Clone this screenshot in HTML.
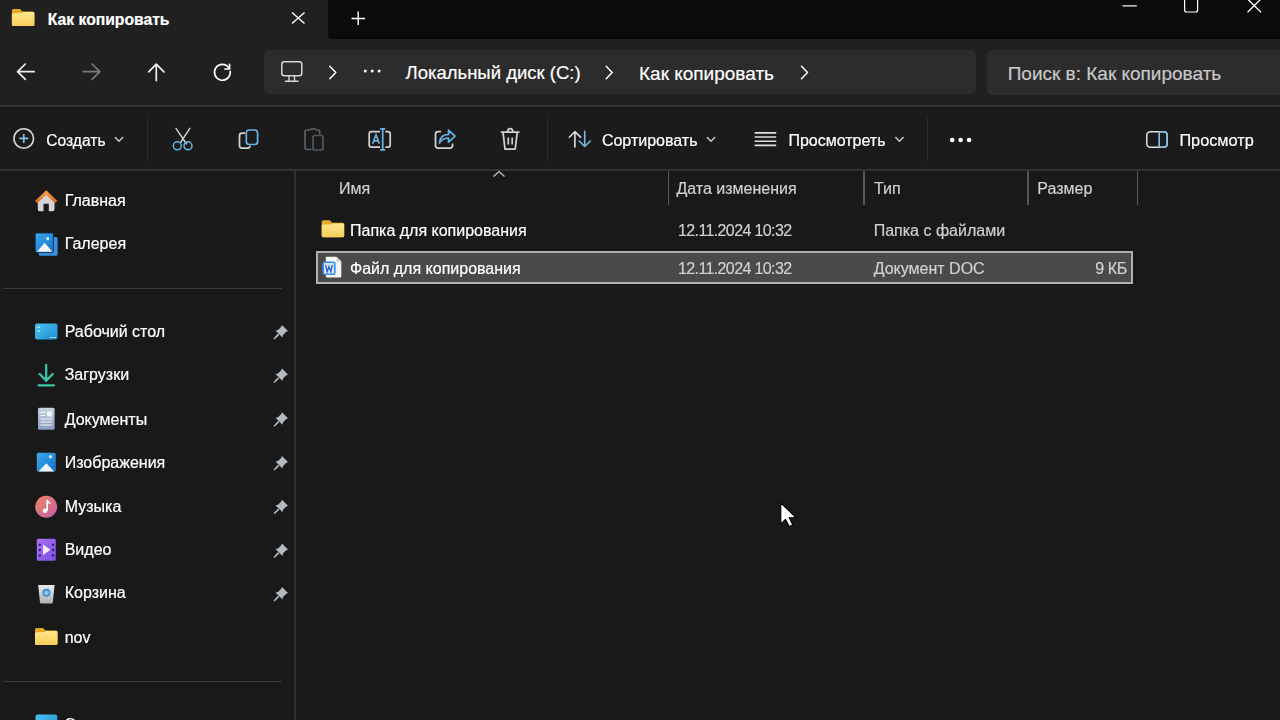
<!DOCTYPE html>
<html><head><meta charset="utf-8">
<style>
*{margin:0;padding:0;box-sizing:border-box}
html,body{width:1280px;height:720px;overflow:hidden;background:#191919;font-family:"Liberation Sans",sans-serif;color:#fff}
.a{position:absolute}
svg.i{position:absolute;overflow:visible}
.t{position:absolute;white-space:nowrap;line-height:1;-webkit-text-stroke:0.2px currentColor}
</style></head><body><div id="wrap" style="position:absolute;left:-4px;top:-4px;width:1288px;height:728px;overflow:hidden;filter:blur(0.35px)"><div style="position:absolute;left:4px;top:4px;width:1280px;height:720px">
<div class="a" style="left:0;top:0;width:1280px;height:105px;background:#202020"></div>
<div class="a" style="left:328px;top:0;width:952px;height:39.4px;background:#0b0b0b;border-bottom-left-radius:4px"></div>
<div class="a" style="left:332px;top:35px;width:948px;height:4.4px;background:linear-gradient(#0b0b0b,#060606)"></div>
<div class="a" style="left:263.5px;top:50px;width:712px;height:44px;background:#2c2c2c;border-radius:5px"></div>
<div class="a" style="left:986.8px;top:50px;width:320px;height:45px;background:#2c2c2c;border-radius:5px"></div>
<div class="a" style="left:0;top:107px;width:1280px;height:62px;background:#1b1b1b"></div>
<div class="a" style="left:0;top:107px;width:1280px;height:1.5px;background:#171717"></div>
<div class="a" style="left:0;top:105px;width:1280px;height:2px;background:#333333"></div>
<div class="a" style="left:0;top:169px;width:1280px;height:2px;background:#333333"></div>
<div class="a" style="left:292.5px;top:171px;width:1.5px;height:549px;background:#161616"></div>
<div class="a" style="left:294.3px;top:171px;width:2px;height:549px;background:#2f2f2f"></div>
<div class="a" style="left:146.5px;top:118px;width:1px;height:43px;background:#2e2e2e"></div>
<div class="a" style="left:546.5px;top:118px;width:1px;height:43px;background:#2e2e2e"></div>
<div class="a" style="left:927.0px;top:118px;width:1px;height:43px;background:#2e2e2e"></div>
<div class="a" style="left:3px;top:288px;width:279px;height:1px;background:#3a3a3a"></div>
<div class="a" style="left:3px;top:681px;width:279px;height:1px;background:#3a3a3a"></div>
<div class="a" style="left:667.85px;top:171px;width:1.6px;height:34px;background:#575757"></div>
<div class="a" style="left:863.15px;top:171px;width:1.6px;height:34px;background:#575757"></div>
<div class="a" style="left:1027.25px;top:171px;width:1.6px;height:34px;background:#575757"></div>
<div class="a" style="left:1136.65px;top:171px;width:1.6px;height:34px;background:#575757"></div>
<div class="a" style="left:316.2px;top:250.7px;width:817px;height:33.6px;background:#4a4a4a;border:2px solid #b0b0b0"></div>
<div class="t" style="left:47.80px;top:11.71px;font-size:15.7px;color:#ffffff;font-weight:700;">Как копировать</div>
<div class="t" style="left:405.50px;top:64.14px;font-size:18.5px;color:#ffffff;font-weight:400;">Локальный диск (C:)</div>
<div class="t" style="left:639.00px;top:63.72px;font-size:19px;color:#ffffff;font-weight:400;">Как копировать</div>
<div class="t" style="left:1007.70px;top:63.72px;font-size:19px;color:#c8c8c8;font-weight:400;">Поиск в: Как копировать</div>
<div class="t" style="left:46.25px;top:133.04px;font-size:15.6px;color:#ffffff;font-weight:400;">Создать</div>
<div class="t" style="left:601.90px;top:132.71px;font-size:16px;color:#ffffff;font-weight:400;">Сортировать</div>
<div class="t" style="left:788.40px;top:132.71px;font-size:16px;color:#ffffff;font-weight:400;">Просмотреть</div>
<div class="t" style="left:1179.40px;top:132.45px;font-size:16.3px;color:#ffffff;font-weight:400;">Просмотр</div>
<div class="t" style="left:64.70px;top:192.96px;font-size:16px;color:#ffffff;font-weight:400;">Главная</div>
<div class="t" style="left:64.70px;top:236.46px;font-size:16px;color:#ffffff;font-weight:400;">Галерея</div>
<div class="t" style="left:64.70px;top:323.86px;font-size:16px;color:#ffffff;font-weight:400;">Рабочий стол</div>
<div class="t" style="left:64.70px;top:367.26px;font-size:16px;color:#ffffff;font-weight:400;">Загрузки</div>
<div class="t" style="left:64.70px;top:411.96px;font-size:16px;color:#ffffff;font-weight:400;">Документы</div>
<div class="t" style="left:64.70px;top:454.96px;font-size:16px;color:#ffffff;font-weight:400;">Изображения</div>
<div class="t" style="left:64.70px;top:498.66px;font-size:16px;color:#ffffff;font-weight:400;">Музыка</div>
<div class="t" style="left:64.70px;top:542.36px;font-size:16px;color:#ffffff;font-weight:400;">Видео</div>
<div class="t" style="left:64.70px;top:585.36px;font-size:16px;color:#ffffff;font-weight:400;">Корзина</div>
<div class="t" style="left:64.70px;top:629.56px;font-size:16px;color:#ffffff;font-weight:400;">nov</div>
<div class="t" style="left:339.00px;top:180.76px;font-size:16px;color:#d0d0d0;font-weight:400;">Имя</div>
<div class="t" style="left:676.40px;top:180.76px;font-size:16px;color:#d0d0d0;font-weight:400;">Дата изменения</div>
<div class="t" style="left:874.00px;top:180.76px;font-size:16px;color:#d0d0d0;font-weight:400;">Тип</div>
<div class="t" style="left:1037.30px;top:180.76px;font-size:16px;color:#d0d0d0;font-weight:400;">Размер</div>
<div class="t" style="left:350.00px;top:222.86px;font-size:16px;color:#ffffff;font-weight:400;">Папка для копирования</div>
<div class="t" style="left:678.00px;top:222.86px;font-size:16px;color:#d0d0d0;font-weight:400;letter-spacing:-0.62px">12.11.2024 10:32</div>
<div class="t" style="left:873.70px;top:222.86px;font-size:16px;color:#d0d0d0;font-weight:400;">Папка с файлами</div>
<div class="t" style="left:350.00px;top:260.96px;font-size:16px;color:#ffffff;font-weight:400;">Файл для копирования</div>
<div class="t" style="left:678.00px;top:260.96px;font-size:16px;color:#d0d0d0;font-weight:400;letter-spacing:-0.62px">12.11.2024 10:32</div>
<div class="t" style="left:873.70px;top:260.96px;font-size:16px;color:#d0d0d0;font-weight:400;">Документ DOC</div>
<div class="t" style="right:153.20px;top:260.96px;font-size:16px;color:#d0d0d0;font-weight:400;letter-spacing:-0.4px">9 КБ</div>
<div class="t" style="left:64.70px;top:717.46px;font-size:16px;color:#ffffff;font-weight:400;">Этот компьютер</div>
<svg class="i" style="left:0;top:0" width="1280" height="720" viewBox="0 0 1280 720"><defs>
<linearGradient id="fgrad" x1="0" y1="0" x2="0" y2="1"><stop offset="0" stop-color="#ffe88e"/><stop offset="1" stop-color="#f6cd58"/></linearGradient>
<linearGradient id="roof" x1="0" y1="0" x2="0" y2="1"><stop offset="0" stop-color="#f7a24a"/><stop offset="1" stop-color="#d86a1e"/></linearGradient>
<linearGradient id="desk" x1="0" y1="0" x2="1" y2="1"><stop offset="0" stop-color="#4cc2f0"/><stop offset="1" stop-color="#1a8fd0"/></linearGradient>
<linearGradient id="pic" x1="0" y1="0" x2="1" y2="1"><stop offset="0" stop-color="#3aa7ee"/><stop offset="1" stop-color="#1473c8"/></linearGradient>
<linearGradient id="mus" x1="0" y1="0" x2="1" y2="1"><stop offset="0" stop-color="#f08a60"/><stop offset="1" stop-color="#c05aa8"/></linearGradient>
<linearGradient id="vid" x1="0" y1="0" x2="1" y2="1"><stop offset="0" stop-color="#a774f4"/><stop offset="1" stop-color="#7e4ee0"/></linearGradient>
<linearGradient id="doc" x1="0" y1="0" x2="0" y2="1"><stop offset="0" stop-color="#c8d4e4"/><stop offset="1" stop-color="#8a9cb8"/></linearGradient>
<linearGradient id="bin" x1="0" y1="0" x2="0" y2="1"><stop offset="0" stop-color="#e8ecf0"/><stop offset="1" stop-color="#a8b0b8"/></linearGradient>
</defs>
<g transform="translate(11.9,8.5) scale(1.0)">
<path d="M1.5 0.5 H8 L10.5 3 H21 Q22.5 3 22.5 4.5 V16 Q22.5 17.5 21 17.5 H1.5 Q0 17.5 0 16 V2 Q0 0.5 1.5 0.5Z" fill="#e6a826"/>
<path d="M1.5 4.8 H9 L11 3.6 H21 Q22.5 3.6 22.5 5.1 V16 Q22.5 17.5 21 17.5 H1.5 Q0 17.5 0 16 V6.3 Q0 4.8 1.5 4.8Z" fill="url(#fgrad)"/>
</g>
<path d="M292 12.5 L304.5 23.5 M304.5 12.5 L292 23.5" stroke="#ffffff" stroke-width="1.4" fill="none"/>
<path d="M351.5 18.5 H365 M358.2 11.5 V25" stroke="#ffffff" stroke-width="1.4" fill="none"/>
<path d="M1122.5 5.9 H1136.8" stroke="#ffffff" stroke-width="1.2" fill="none"/>
<rect x="1184.6" y="-3" width="13" height="15" rx="2" stroke="#ffffff" stroke-width="1.2" fill="none"/>
<path d="M1247.5 -1 L1261 12.2 M1261 -1 L1247.5 12.2" stroke="#ffffff" stroke-width="1.2" fill="none"/>
<path d="M17.6 71.7 H34.2 M25.3 64 L17.6 71.7 L25.3 79.4" stroke="#f0f0f0" stroke-width="1.7" fill="none" stroke-linejoin="round" stroke-linecap="round"/>
<path d="M83.2 71.7 H99.8 M92.1 64 L99.8 71.7 L92.1 79.4" stroke="#7a7a7a" stroke-width="1.7" fill="none" stroke-linejoin="round" stroke-linecap="round"/>
<path d="M156.3 64.3 V80.6 M148.7 71.8 L156.3 64.2 L163.9 71.8" stroke="#f0f0f0" stroke-width="1.7" fill="none" stroke-linejoin="round" stroke-linecap="round"/>
<path d="M228.9 67.9 A7.9 7.9 0 1 0 230.2 71.4" stroke="#ffffff" stroke-width="1.7" fill="none" stroke-linecap="round"/>
<path d="M229.6 64.3 V69 H224.9" stroke="#ffffff" stroke-width="1.7" fill="none" stroke-linejoin="round" stroke-linecap="round"/>
<rect x="281.8" y="61.8" width="20" height="14" rx="2.5" stroke="#d8d8d8" stroke-width="1.5" fill="none"/>
<path d="M289 76 V80.5 M294.5 76 V80.5 M285.5 81.2 H298" stroke="#d8d8d8" stroke-width="1.4" fill="none" stroke-linecap="round"/>
<path d="M329.8 66.3 L335.8 72.5 L329.8 78.7" stroke="#ffffff" stroke-width="1.5" fill="none" stroke-linecap="round" stroke-linejoin="round"/>
<path d="M606.2 66.3 L612.2 72.5 L606.2 78.7" stroke="#ffffff" stroke-width="1.5" fill="none" stroke-linecap="round" stroke-linejoin="round"/>
<path d="M801.5 66.3 L807.5 72.5 L801.5 78.7" stroke="#ffffff" stroke-width="1.5" fill="none" stroke-linecap="round" stroke-linejoin="round"/>
<circle cx="365.3" cy="71" r="1.5" fill="#ffffff"/>
<circle cx="372.2" cy="71" r="1.5" fill="#ffffff"/>
<circle cx="379.1" cy="71" r="1.5" fill="#ffffff"/>
<circle cx="23.75" cy="138.5" r="9.8" stroke="#d8d8d8" stroke-width="1.6" fill="none"/>
<path d="M23.75 134 V143 M19.25 138.4 H28.25" stroke="#80c2ea" stroke-width="1.7" fill="none"/>
<path d="M115.3 137.5 L119 141.3 L122.7 137.5" stroke="#c8c8c8" stroke-width="1.5" fill="none" stroke-linecap="round" stroke-linejoin="round"/>
<path d="M707.3 137.5 L711 141.3 L714.7 137.5" stroke="#c8c8c8" stroke-width="1.5" fill="none" stroke-linecap="round" stroke-linejoin="round"/>
<path d="M895.8 137.5 L899.5 141.3 L903.2 137.5" stroke="#c8c8c8" stroke-width="1.5" fill="none" stroke-linecap="round" stroke-linejoin="round"/>
<path d="M176 128.3 L186.5 144 M189.8 128.3 L183.8 137.5" stroke="#d2d2d2" stroke-width="1.4" fill="none" stroke-linecap="round"/>
<path d="M180.5 142.5 L183 138.8" stroke="#d2d2d2" stroke-width="1.4" fill="none"/>
<circle cx="177.3" cy="145.8" r="4" stroke="#66b4e6" stroke-width="1.5" fill="none"/>
<circle cx="188" cy="145.8" r="4" stroke="#66b4e6" stroke-width="1.5" fill="none"/>
<path d="M245.2 133.2 H242 Q239.5 133.2 239.5 135.7 V145.5 Q239.5 148.2 242 148.2 H247.5 Q250 148.2 250 145.8" stroke="#d2d2d2" stroke-width="1.75" fill="none"/>
<rect x="246.3" y="130" width="11.3" height="14.5" rx="3" stroke="#66b4e6" stroke-width="1.7" fill="none"/>
<path d="M311.5 149.5 H307 Q305 149.5 305 147.5 V132 Q305 130 307 130 H309.5 Q310 128.8 313 128.8 Q316 128.8 316.5 130 H317.5 Q319.8 130 319.8 132.3 V134.5" stroke="#5e5e5e" stroke-width="1.7" fill="none"/>
<rect x="313" y="135.5" width="10" height="14.5" rx="2" stroke="#4a5a66" stroke-width="1.7" fill="none"/>
<path d="M380 131.5 H371.5 Q369.2 131.5 369.2 134 V144.8 Q369.2 147.2 371.5 147.2 H380 M385.3 131.5 H387.8 Q390.2 131.5 390.2 134 V144.8 Q390.2 147.2 387.8 147.2 H385.3" stroke="#d2d2d2" stroke-width="1.75" fill="none"/>
<path d="M372.6 143.8 L376 134.8 L379.4 143.8 M373.8 140.8 H378.2" stroke="#66b4e6" stroke-width="1.7" fill="none"/>
<path d="M382.7 128.6 V150 M380.2 128.8 H385.2 M380.2 149.8 H385.2" stroke="#66b4e6" stroke-width="1.75" fill="none"/>
<path d="M441 131.5 H438 Q435.5 131.5 435.5 134 V145.5 Q435.5 148 438 148 H450 Q452.5 148 452.5 145.5 V143.5" stroke="#d2d2d2" stroke-width="1.75" fill="none"/>
<path d="M439.5 143 Q440 134.5 448.5 134.5 V130.2 L455 136.2 L448.5 142.2 V138 Q442.5 138 439.5 143 Z" stroke="#66b4e6" stroke-width="1.7" fill="none" stroke-linejoin="round"/>
<path d="M500.8 132 H519.5 M503 132 L505 149.2 H515.2 L517.3 132 M507.5 131.8 Q507.8 128.6 510.2 128.6 Q512.6 128.6 512.9 131.8" stroke="#d2d2d2" stroke-width="1.75" fill="none" stroke-linejoin="round"/>
<path d="M508.3 137.5 V144.5 M512.2 137.5 V144.5" stroke="#d2d2d2" stroke-width="1.7" fill="none"/>
<path d="M574.9 147.1 V131.8 M569.4 137.2 L574.9 131.7 L580.6 137.2" stroke="#e0e0e0" stroke-width="1.6" fill="none" stroke-linecap="round" stroke-linejoin="round"/>
<path d="M584.7 131.2 V146.4 M579.2 141 L584.7 146.5 L590.3 141" stroke="#74bce6" stroke-width="1.6" fill="none" stroke-linecap="round" stroke-linejoin="round"/>
<path d="M755.2 132.9 H775.6" stroke="#e0e0e0" stroke-width="1.6" fill="none" stroke-linecap="round"/>
<path d="M755.2 137.05 H775.6" stroke="#e0e0e0" stroke-width="1.6" fill="none" stroke-linecap="round"/>
<path d="M755.2 141.2 H775.6" stroke="#e0e0e0" stroke-width="1.6" fill="none" stroke-linecap="round"/>
<path d="M755.2 145.35 H775.6" stroke="#e0e0e0" stroke-width="1.6" fill="none" stroke-linecap="round"/>
<circle cx="952.2" cy="140" r="2.3" fill="#ffffff"/>
<circle cx="960.6" cy="140" r="2.3" fill="#ffffff"/>
<circle cx="969.1" cy="140" r="2.3" fill="#ffffff"/>
<rect x="1146.8" y="131.8" width="20.4" height="15.4" rx="3.5" stroke="#e0e0e0" stroke-width="1.5" fill="none"/>
<path d="M1159.2 132 V147 M1159.2 131.8 H1163.7 Q1167.2 131.8 1167.2 135.3 V143.7 Q1167.2 147.2 1163.7 147.2 H1159.2" stroke="#80c4ec" stroke-width="1.6" fill="none"/>
<path d="M493.5 176.5 L499 171.5 L504.5 176.5" stroke="#c8c8c8" stroke-width="1.2" fill="none"/>
<path d="M37.8 199.5 V209.5 Q37.8 211.2 39.5 211.2 H43.5 V203.8 H48.8 V211.2 H52.8 Q54.5 211.2 54.5 209.5 V199.5 L46.2 192.8 Z" fill="#d4d4d8"/>
<path d="M35 201 L46.2 190.2 L57.4 201 L55 203.2 L46.2 194.8 L37.4 203.2 Z" fill="url(#roof)"/>
<rect x="38.8" y="237" width="18.8" height="18.8" rx="1.5" fill="#3a8ee0"/>
<rect x="35.2" y="233" width="18.2" height="19.6" rx="1.5" fill="url(#pic)" stroke="#0c2340" stroke-width="0.8"/>
<path d="M37 251.8 L44.6 242.8 L52.4 251.8 Z" fill="#f4f8ff"/>
<circle cx="47.7" cy="238.6" r="1.6" fill="#d8eeff"/>
<rect x="35" y="323.5" width="22.5" height="16" rx="2" fill="url(#desk)"/>
<path d="M37.5 327.2 H40 M37.5 331 H40" stroke="#e8f8ff" stroke-width="1.2"/>
<path d="M50.5 337.5 H52.5 M53.8 337.5 H55.8" stroke="#d8f0ff" stroke-width="1.2"/>
<path d="M46.2 364.8 V380.5 M39.6 374 L46.2 380.6 L52.8 374" stroke="#3cc8a8" stroke-width="2.2" fill="none" stroke-linecap="round"/>
<path d="M38.5 385.3 H54" stroke="#3cc8a8" stroke-width="2.2" stroke-linecap="round"/>
<rect x="38" y="407.8" width="16.6" height="22" rx="1.5" fill="url(#doc)"/>
<path d="M40.5 412.5 H45.5 M40.5 415.5 H45.5 M40.5 419 H52 M40.5 422 H52 M40.5 425 H52" stroke="#f0f4fa" stroke-width="1.1"/>
<rect x="47" y="411.5" width="5" height="5" fill="#f0f4fa"/>
<rect x="36.8" y="452.8" width="19" height="18.6" rx="1.5" fill="url(#pic)"/>
<path d="M38.5 471.4 L46.3 463.2 L54.1 471.4 Z" fill="#f0f6ff"/>
<circle cx="50.5" cy="456.8" r="1.7" fill="#cfe8ff"/>
<circle cx="46.2" cy="506.8" r="11" fill="url(#mus)"/>
<path d="M47.2 500 V510.5" stroke="#fff" stroke-width="1.6"/>
<circle cx="45" cy="510.8" r="2.3" fill="#fff"/>
<path d="M47.2 500 Q48.5 503 50.5 503.5" stroke="#fff" stroke-width="1.5" fill="none"/>
<rect x="36.8" y="538.8" width="19" height="22" rx="1.5" fill="url(#vid)"/>
<circle cx="39.8" cy="544.7" r="1.2" fill="#3a1a80"/>
<circle cx="53" cy="544.7" r="1.2" fill="#3a1a80"/>
<circle cx="39.8" cy="550" r="1.2" fill="#3a1a80"/>
<circle cx="53" cy="550" r="1.2" fill="#3a1a80"/>
<circle cx="39.8" cy="555.4" r="1.2" fill="#3a1a80"/>
<circle cx="53" cy="555.4" r="1.2" fill="#3a1a80"/>
<path d="M43 544.5 L50.5 549.8 L43 555 Z" fill="#f4ecff"/>
<path d="M38.2 585 H54.6 L52.8 602.5 Q52.6 603.4 51.6 603.4 H41.2 Q40.2 603.4 40 602.5 Z" fill="url(#bin)"/>
<circle cx="46.4" cy="592.8" r="3.2" fill="#8ec4ec" stroke="#3e8fd0" stroke-width="1.6"/>
<g transform="translate(35,627.4) scale(1.0)">
<path d="M1.5 0.5 H8 L10.5 3 H21 Q22.5 3 22.5 4.5 V16 Q22.5 17.5 21 17.5 H1.5 Q0 17.5 0 16 V2 Q0 0.5 1.5 0.5Z" fill="#e6a826"/>
<path d="M1.5 4.8 H9 L11 3.6 H21 Q22.5 3.6 22.5 5.1 V16 Q22.5 17.5 21 17.5 H1.5 Q0 17.5 0 16 V6.3 Q0 4.8 1.5 4.8Z" fill="url(#fgrad)"/>
</g>
<g transform="translate(273.5,324.4)" fill="#b2babf" stroke="none">
<path d="M8.5 0.5 L14.5 6.5 L12.5 7.5 L9.5 10.5 L9 13 L2 6 L4.5 5.5 L7.5 2.5 Z"/>
<path d="M4.5 9.2 L5.8 10.5 L1 15 L0 14 Z"/>
</g>
<g transform="translate(273.5,368.1)" fill="#b2babf" stroke="none">
<path d="M8.5 0.5 L14.5 6.5 L12.5 7.5 L9.5 10.5 L9 13 L2 6 L4.5 5.5 L7.5 2.5 Z"/>
<path d="M4.5 9.2 L5.8 10.5 L1 15 L0 14 Z"/>
</g>
<g transform="translate(273.5,411.8)" fill="#b2babf" stroke="none">
<path d="M8.5 0.5 L14.5 6.5 L12.5 7.5 L9.5 10.5 L9 13 L2 6 L4.5 5.5 L7.5 2.5 Z"/>
<path d="M4.5 9.2 L5.8 10.5 L1 15 L0 14 Z"/>
</g>
<g transform="translate(273.5,455.5)" fill="#b2babf" stroke="none">
<path d="M8.5 0.5 L14.5 6.5 L12.5 7.5 L9.5 10.5 L9 13 L2 6 L4.5 5.5 L7.5 2.5 Z"/>
<path d="M4.5 9.2 L5.8 10.5 L1 15 L0 14 Z"/>
</g>
<g transform="translate(273.5,499.2)" fill="#b2babf" stroke="none">
<path d="M8.5 0.5 L14.5 6.5 L12.5 7.5 L9.5 10.5 L9 13 L2 6 L4.5 5.5 L7.5 2.5 Z"/>
<path d="M4.5 9.2 L5.8 10.5 L1 15 L0 14 Z"/>
</g>
<g transform="translate(273.5,542.9)" fill="#b2babf" stroke="none">
<path d="M8.5 0.5 L14.5 6.5 L12.5 7.5 L9.5 10.5 L9 13 L2 6 L4.5 5.5 L7.5 2.5 Z"/>
<path d="M4.5 9.2 L5.8 10.5 L1 15 L0 14 Z"/>
</g>
<g transform="translate(273.5,586.6)" fill="#b2babf" stroke="none">
<path d="M8.5 0.5 L14.5 6.5 L12.5 7.5 L9.5 10.5 L9 13 L2 6 L4.5 5.5 L7.5 2.5 Z"/>
<path d="M4.5 9.2 L5.8 10.5 L1 15 L0 14 Z"/>
</g>
<g transform="translate(321.7,219.8) scale(1.0)">
<path d="M1.5 0.5 H8 L10.5 3 H21 Q22.5 3 22.5 4.5 V16 Q22.5 17.5 21 17.5 H1.5 Q0 17.5 0 16 V2 Q0 0.5 1.5 0.5Z" fill="#e6a826"/>
<path d="M1.5 4.8 H9 L11 3.6 H21 Q22.5 3.6 22.5 5.1 V16 Q22.5 17.5 21 17.5 H1.5 Q0 17.5 0 16 V6.3 Q0 4.8 1.5 4.8Z" fill="url(#fgrad)"/>
</g>
<path d="M325.8 256.8 H336.5 L341.3 261.6 V276.3 Q341.3 277.4 340.2 277.4 H326.9 Q325.8 277.4 325.8 276.3 Z" fill="#f4f6f8"/>
<path d="M336.5 256.8 V261.6 H341.3" fill="#c8d0da"/>
<rect x="323.2" y="262.2" width="11.6" height="12" rx="1.2" fill="#d8e8fc" stroke="#3a8ee8" stroke-width="1.6"/>
<path d="M325.6 264.8 L327.2 271.6 L329 266.5 L330.8 271.6 L332.4 264.8" stroke="#1f5fc8" stroke-width="1.3" fill="none"/>
<rect x="35.5" y="714.6" width="21.8" height="15" rx="2" fill="url(#desk)"/>
<path d="M780.8 503 V524 L785.5 519.3 L789.3 526.6 L792.8 525 L789.2 517.8 L796 517.6 Z" fill="#ffffff" stroke="#000" stroke-width="1.1" stroke-linejoin="miter"/></svg>
</div></div></body></html>
